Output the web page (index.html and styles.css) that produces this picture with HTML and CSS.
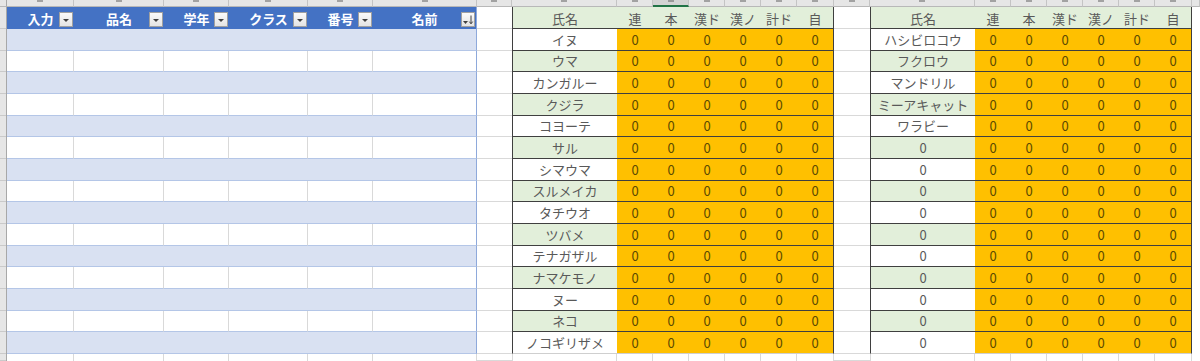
FILE: index.html
```html
<!DOCTYPE html>
<html lang="ja">
<head>
<meta charset="utf-8">
<title>Sheet</title>
<link rel="stylesheet" href="styles.css">
</head>
<body>
<div class="sheet">
  <div class="colbar">
    <div class="ch corner"></div>
    <div class="ch w67"><i class="mk"></i></div>
    <div class="ch w90"><i class="mk"></i></div>
    <div class="ch w65"><i class="mk"></i></div>
    <div class="ch w79"><i class="mk"></i></div>
    <div class="ch w65"><i class="mk"></i></div>
    <div class="ch w104"><i class="mk"></i></div>
    <div class="ch w35"><i class="mk"></i></div>
    <div class="ch w105"><i class="mk"></i></div>
    <div class="ch w36"><i class="mk"></i></div>
    <div class="ch w36 sel"><i class="mk"></i></div>
    <div class="ch w36"><i class="mk"></i></div>
    <div class="ch w36"><i class="mk"></i></div>
    <div class="ch w36"><i class="mk"></i></div>
    <div class="ch w37"><i class="mk"></i></div>
    <div class="ch w36"><i class="mk"></i></div>
    <div class="ch w105"><i class="mk"></i></div>
    <div class="ch w36"><i class="mk"></i></div>
    <div class="ch w36"><i class="mk"></i></div>
    <div class="ch w36"><i class="mk"></i></div>
    <div class="ch w36"><i class="mk"></i></div>
    <div class="ch w36"><i class="mk"></i></div>
    <div class="ch w37"><i class="mk"></i></div>
    <div class="ch rest"></div>
  </div>

  <div class="grid">
    <div class="col rowbar">
      <div class="hdr"></div>
      <div class="row"></div><div class="row"></div><div class="row"></div><div class="row"></div><div class="row"></div>
      <div class="row"></div><div class="row"></div><div class="row"></div><div class="row"></div><div class="row"></div>
      <div class="row"></div><div class="row"></div><div class="row"></div><div class="row"></div><div class="row"></div>
      <div class="tail"></div>
    </div>

    <div class="col list">
      <div class="lrow lhead hdr">
        <div>入力<span class="fbtn"><svg width="6" height="3" viewBox="0 0 6 3"><path d="M0 0h6L3 3z" fill="#404040"/></svg></span></div>
        <div>品名<span class="fbtn"><svg width="6" height="3" viewBox="0 0 6 3"><path d="M0 0h6L3 3z" fill="#404040"/></svg></span></div>
        <div>学年<span class="fbtn"><svg width="6" height="3" viewBox="0 0 6 3"><path d="M0 0h6L3 3z" fill="#404040"/></svg></span></div>
        <div>クラス<span class="fbtn"><svg width="6" height="3" viewBox="0 0 6 3"><path d="M0 0h6L3 3z" fill="#404040"/></svg></span></div>
        <div>番号<span class="fbtn"><svg width="6" height="3" viewBox="0 0 6 3"><path d="M0 0h6L3 3z" fill="#404040"/></svg></span></div>
        <div>名前<span class="fbtn sort"><svg width="12" height="11" viewBox="0 0 12 11"><path d="M1 7h5L3.5 10z" fill="#404040"/><path d="M9 1.5v8M7.3 7.6L9 9.8l1.7-2.2" stroke="#404040" stroke-width="1" fill="none"/></svg></span></div>
      </div>
      <div class="lrow band row"><div></div><div></div><div></div><div></div><div></div><div></div></div>
      <div class="lrow plain row"><div></div><div></div><div></div><div></div><div></div><div></div></div>
      <div class="lrow band row"><div></div><div></div><div></div><div></div><div></div><div></div></div>
      <div class="lrow plain row"><div></div><div></div><div></div><div></div><div></div><div></div></div>
      <div class="lrow band row"><div></div><div></div><div></div><div></div><div></div><div></div></div>
      <div class="lrow plain row"><div></div><div></div><div></div><div></div><div></div><div></div></div>
      <div class="lrow band row"><div></div><div></div><div></div><div></div><div></div><div></div></div>
      <div class="lrow plain row"><div></div><div></div><div></div><div></div><div></div><div></div></div>
      <div class="lrow band row"><div></div><div></div><div></div><div></div><div></div><div></div></div>
      <div class="lrow plain row"><div></div><div></div><div></div><div></div><div></div><div></div></div>
      <div class="lrow band row"><div></div><div></div><div></div><div></div><div></div><div></div></div>
      <div class="lrow plain row"><div></div><div></div><div></div><div></div><div></div><div></div></div>
      <div class="lrow band row"><div></div><div></div><div></div><div></div><div></div><div></div></div>
      <div class="lrow plain row"><div></div><div></div><div></div><div></div><div></div><div></div></div>
      <div class="lrow band row"><div></div><div></div><div></div><div></div><div></div><div></div></div>
      <div class="lrow ltail tail"><div></div><div></div><div></div><div></div><div></div><div></div></div>
    </div>

    <div class="col gap w35">
      <div class="hdr"></div>
      <div class="row"></div><div class="row"></div><div class="row"></div><div class="row"></div><div class="row"></div>
      <div class="row"></div><div class="row"></div><div class="row"></div><div class="row"></div><div class="row"></div>
      <div class="row"></div><div class="row"></div><div class="row"></div><div class="row"></div><div class="row"></div>
      <div class="tail"></div>
    </div>

    <div class="col score">
      <div class="srow shead hdr"><div class="sn">氏名</div><div>連</div><div>本</div><div>漢ド</div><div>漢ノ</div><div>計ド</div><div>自</div></div>
      <div class="srow sr row"><div class="sn">イヌ</div><div class="v">0</div><div class="v">0</div><div class="v">0</div><div class="v">0</div><div class="v">0</div><div class="v">0</div></div>
      <div class="srow sr alt row"><div class="sn">ウマ</div><div class="v">0</div><div class="v">0</div><div class="v">0</div><div class="v">0</div><div class="v">0</div><div class="v">0</div></div>
      <div class="srow sr row"><div class="sn">カンガルー</div><div class="v">0</div><div class="v">0</div><div class="v">0</div><div class="v">0</div><div class="v">0</div><div class="v">0</div></div>
      <div class="srow sr alt row"><div class="sn">クジラ</div><div class="v">0</div><div class="v">0</div><div class="v">0</div><div class="v">0</div><div class="v">0</div><div class="v">0</div></div>
      <div class="srow sr row"><div class="sn">コヨーテ</div><div class="v">0</div><div class="v">0</div><div class="v">0</div><div class="v">0</div><div class="v">0</div><div class="v">0</div></div>
      <div class="srow sr alt row"><div class="sn">サル</div><div class="v">0</div><div class="v">0</div><div class="v">0</div><div class="v">0</div><div class="v">0</div><div class="v">0</div></div>
      <div class="srow sr row"><div class="sn">シマウマ</div><div class="v">0</div><div class="v">0</div><div class="v">0</div><div class="v">0</div><div class="v">0</div><div class="v">0</div></div>
      <div class="srow sr alt row"><div class="sn">スルメイカ</div><div class="v">0</div><div class="v">0</div><div class="v">0</div><div class="v">0</div><div class="v">0</div><div class="v">0</div></div>
      <div class="srow sr row"><div class="sn">タチウオ</div><div class="v">0</div><div class="v">0</div><div class="v">0</div><div class="v">0</div><div class="v">0</div><div class="v">0</div></div>
      <div class="srow sr alt row"><div class="sn">ツバメ</div><div class="v">0</div><div class="v">0</div><div class="v">0</div><div class="v">0</div><div class="v">0</div><div class="v">0</div></div>
      <div class="srow sr row"><div class="sn">テナガザル</div><div class="v">0</div><div class="v">0</div><div class="v">0</div><div class="v">0</div><div class="v">0</div><div class="v">0</div></div>
      <div class="srow sr alt row"><div class="sn">ナマケモノ</div><div class="v">0</div><div class="v">0</div><div class="v">0</div><div class="v">0</div><div class="v">0</div><div class="v">0</div></div>
      <div class="srow sr row"><div class="sn">ヌー</div><div class="v">0</div><div class="v">0</div><div class="v">0</div><div class="v">0</div><div class="v">0</div><div class="v">0</div></div>
      <div class="srow sr alt row"><div class="sn">ネコ</div><div class="v">0</div><div class="v">0</div><div class="v">0</div><div class="v">0</div><div class="v">0</div><div class="v">0</div></div>
      <div class="srow sr last row"><div class="sn">ノコギリザメ</div><div class="v">0</div><div class="v">0</div><div class="v">0</div><div class="v">0</div><div class="v">0</div><div class="v">0</div></div>
      <div class="srow stail tail"><div></div><div></div><div></div><div></div><div></div><div></div><div></div></div>
    </div>

    <div class="col gap w36">
      <div class="hdr"></div>
      <div class="row"></div><div class="row"></div><div class="row"></div><div class="row"></div><div class="row"></div>
      <div class="row"></div><div class="row"></div><div class="row"></div><div class="row"></div><div class="row"></div>
      <div class="row"></div><div class="row"></div><div class="row"></div><div class="row"></div><div class="row"></div>
      <div class="tail"></div>
    </div>

    <div class="col score">
      <div class="srow shead hdr"><div class="sn">氏名</div><div>連</div><div>本</div><div>漢ド</div><div>漢ノ</div><div>計ド</div><div>自</div></div>
      <div class="srow sr row"><div class="sn">ハシビロコウ</div><div class="v">0</div><div class="v">0</div><div class="v">0</div><div class="v">0</div><div class="v">0</div><div class="v">0</div></div>
      <div class="srow sr alt row"><div class="sn">フクロウ</div><div class="v">0</div><div class="v">0</div><div class="v">0</div><div class="v">0</div><div class="v">0</div><div class="v">0</div></div>
      <div class="srow sr row"><div class="sn">マンドリル</div><div class="v">0</div><div class="v">0</div><div class="v">0</div><div class="v">0</div><div class="v">0</div><div class="v">0</div></div>
      <div class="srow sr alt row"><div class="sn">ミーアキャット</div><div class="v">0</div><div class="v">0</div><div class="v">0</div><div class="v">0</div><div class="v">0</div><div class="v">0</div></div>
      <div class="srow sr row"><div class="sn">ワラビー</div><div class="v">0</div><div class="v">0</div><div class="v">0</div><div class="v">0</div><div class="v">0</div><div class="v">0</div></div>
      <div class="srow sr alt row"><div class="sn">0</div><div class="v">0</div><div class="v">0</div><div class="v">0</div><div class="v">0</div><div class="v">0</div><div class="v">0</div></div>
      <div class="srow sr row"><div class="sn">0</div><div class="v">0</div><div class="v">0</div><div class="v">0</div><div class="v">0</div><div class="v">0</div><div class="v">0</div></div>
      <div class="srow sr alt row"><div class="sn">0</div><div class="v">0</div><div class="v">0</div><div class="v">0</div><div class="v">0</div><div class="v">0</div><div class="v">0</div></div>
      <div class="srow sr row"><div class="sn">0</div><div class="v">0</div><div class="v">0</div><div class="v">0</div><div class="v">0</div><div class="v">0</div><div class="v">0</div></div>
      <div class="srow sr alt row"><div class="sn">0</div><div class="v">0</div><div class="v">0</div><div class="v">0</div><div class="v">0</div><div class="v">0</div><div class="v">0</div></div>
      <div class="srow sr row"><div class="sn">0</div><div class="v">0</div><div class="v">0</div><div class="v">0</div><div class="v">0</div><div class="v">0</div><div class="v">0</div></div>
      <div class="srow sr alt row"><div class="sn">0</div><div class="v">0</div><div class="v">0</div><div class="v">0</div><div class="v">0</div><div class="v">0</div><div class="v">0</div></div>
      <div class="srow sr row"><div class="sn">0</div><div class="v">0</div><div class="v">0</div><div class="v">0</div><div class="v">0</div><div class="v">0</div><div class="v">0</div></div>
      <div class="srow sr alt row"><div class="sn">0</div><div class="v">0</div><div class="v">0</div><div class="v">0</div><div class="v">0</div><div class="v">0</div><div class="v">0</div></div>
      <div class="srow sr last row"><div class="sn">0</div><div class="v">0</div><div class="v">0</div><div class="v">0</div><div class="v">0</div><div class="v">0</div><div class="v">0</div></div>
      <div class="srow stail tail"><div></div><div></div><div></div><div></div><div></div><div></div><div></div></div>
    </div>

    <div class="col gap rest">
      <div class="hdr"></div>
      <div class="row"></div><div class="row"></div><div class="row"></div><div class="row"></div><div class="row"></div>
      <div class="row"></div><div class="row"></div><div class="row"></div><div class="row"></div><div class="row"></div>
      <div class="row"></div><div class="row"></div><div class="row"></div><div class="row"></div><div class="row"></div>
      <div class="tail"></div>
    </div>
  </div>
</div>
</body>
</html>
```

FILE: styles.css
```css
* { box-sizing: border-box; margin: 0; padding: 0; }
html, body { width: 1200px; height: 361px; overflow: hidden; background: #ffffff; }
body {
  font-family: "Noto Sans CJK JP", "Noto Sans", sans-serif;
  font-size: 13px;
  color: #595959;
}
.sheet { display: flex; flex-direction: column; width: 1200px; height: 361px; }

/* column header strip (letters are cut off above the view) */
.colbar { display: flex; height: 7px; flex: none; background: #e6e6e6; }
.ch {
  flex: none; height: 7px; overflow: hidden;
  border-right: 1px solid #c4c4c4; border-bottom: 1px solid #b8b8b8;
  display: flex; justify-content: center; align-items: flex-start;
}
.mk { display: block; width: 6px; height: 2px; background: #6a6a6a; opacity: 0.55; }
.ch.sel { background: #d3d3d3; border-bottom: 2px solid #217346; }
.corner { width: 7px; border-right: 1px solid #a8a8a8; }
.w35 { width: 35px; } .w36 { width: 36px; } .w37 { width: 37px; }
.w65 { width: 65px; } .w67 { width: 67px; } .w79 { width: 79px; }
.w90 { width: 90px; } .w104 { width: 104px; } .w105 { width: 105px; }
.rest { flex: 1; }

/* body grid */
.grid { display: flex; height: 354px; flex: none; }
.col { display: flex; flex-direction: column; flex: none; height: 354px; }
.hdr { height: 22px; flex: none; }
.row { height: 21.667px; flex: none; }
.tail { flex: 1; }

.rowbar { width: 7px; background: #e6e6e6; border-right: 1px solid #a8a8a8; }
.rowbar > div { border-bottom: 1px solid #cacaca; }

/* left list table */
.list { width: 470px; }
.lrow { display: grid; grid-template-columns: 67px 90px 65px 79px 65px 104px; }
.lhead > div {
  position: relative; background: #4472c4; color: #ffffff; font-weight: bold;
  display: flex; align-items: center; justify-content: center; padding-top: 1px;
}
.fbtn {
  position: absolute; right: 1px; bottom: 2px; width: 14px; height: 15px;
  background: linear-gradient(#fafafa, #e4e4e4); border: 1px solid #a0a0a0;
  display: flex; justify-content: center; align-items: flex-end; padding-bottom: 4px;
}
.fbtn.sort { padding-bottom: 1px; }
.band > div { background: #d9e1f2; border-bottom: 1px solid #b4c6e7; }
.plain > div { border-right: 1px solid #d9d9d9; border-bottom: 1px solid #b4c6e7; }
.lrow > div:last-child { border-right: 1px solid #8ea9db; }
.ltail > div { border-right: 1px solid #d9d9d9; }
.ltail > div:last-child { border-right: 1px solid #d9d9d9; }

/* gap columns */
.gap > div { border-bottom: 1px solid #d9d9d9; }

/* score tables */
.score { width: 322px; }
.srow { display: grid; grid-template-columns: 105px 36px 36px 36px 36px 36px 37px; }
.srow > div { display: flex; align-items: center; justify-content: center; white-space: nowrap; }
.shead > div { background: #e2efda; border-bottom: 1px solid #3f3f3f; padding-top: 1px; }
.srow > .sn { border-left: 1px solid #3f3f3f; }
.srow > div:last-child { border-right: 1px solid #3f3f3f; }
.sr > div { border-bottom: 1px solid #3f3f3f; }
.sr.last > div { border-bottom: 1px solid #cfcfcf; }
.sr.alt > .sn { background: #e2efda; }
.sr > .v { background: #ffc000; color: #5c4a00; }
.stail > div { border-right: 1px solid #d9d9d9; }
.stail > div:first-child { border-left: 1px solid #d9d9d9; }
.stail > div:last-child { border-right: 1px solid #d9d9d9; }
```
